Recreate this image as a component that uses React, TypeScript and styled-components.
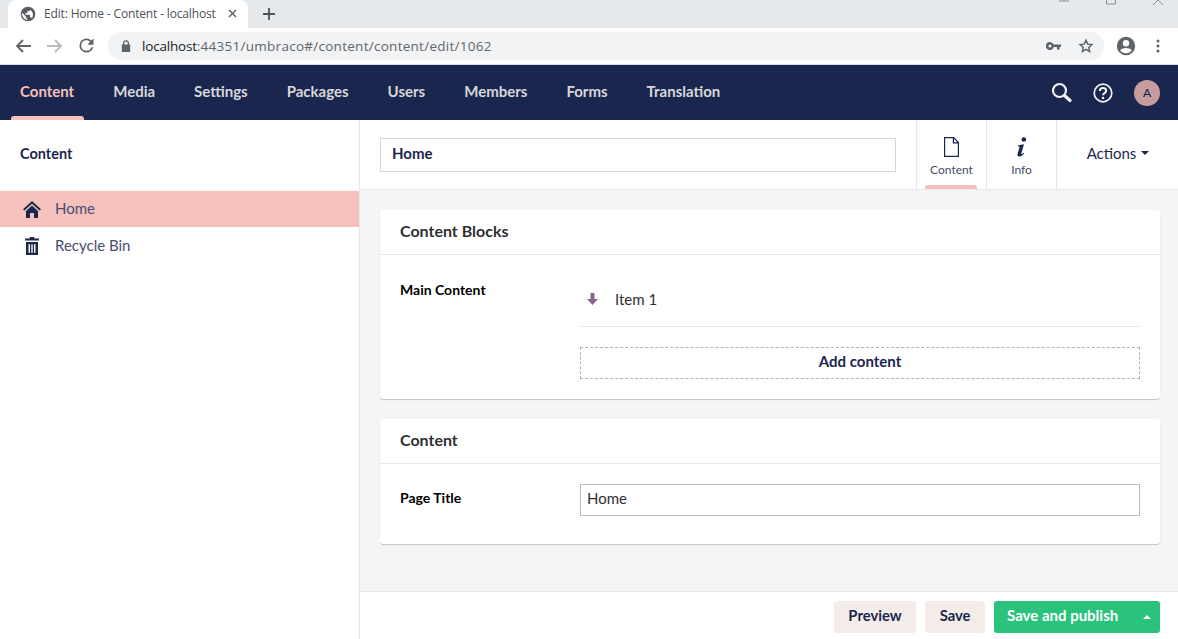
import React from 'react';
import styled, { createGlobalStyle } from 'styled-components';

const GlobalStyle = createGlobalStyle`
    html, body {
        margin: 0;
        padding: 0;
        height: 100%;
        overflow: hidden;
        background: #fff;
    }
    * {
        box-sizing: border-box;
    }
    #root {
        height: 100%;
    }
`;

const Page = styled.div`
    width: 1178px;
    height: 639px;
    display: flex;
    flex-direction: column;
    font-family: Lato, "Open Sans", sans-serif;
    color: #1b264f;
    overflow: hidden;
`;

/* browser chrome */
const TabStrip = styled.div`
    height: 28px;
    flex: none;
    background: #e6e9ec;
    display: flex;
    padding-left: 8px;
`;

const Tab = styled.div`
    width: 240px;
    height: 28px;
    background: #fff;
    border-radius: 8px 8px 0 0;
    display: flex;
    align-items: center;
    padding: 0 0 1px 12px;
    font-family: "Open Sans", sans-serif;
    font-size: 12px;
    letter-spacing: -0.16px;
    color: #4e5156;
`;

const TabTitle = styled.span`
    margin-left: 8px;
    width: 184px;
    white-space: nowrap;
`;

const NewTab = styled.div`
    margin-left: 14px;
    width: 16px;
    display: flex;
    align-items: center;
`;

const WindowControls = styled.div`
    margin-left: auto;
    display: flex;
    align-items: flex-start;
    gap: 35px;
    padding-right: 14px;
`;

const Toolbar = styled.div`
    height: 37px;
    flex: none;
    background: #fff;
    border-bottom: 1px solid #dadce0;
    display: flex;
    align-items: center;
    padding: 0 18px 1px 14px;
`;

const ToolbarButton = styled.div`
    width: 17px;
    height: 17px;
    margin-right: 15px;
    display: flex;
    align-items: center;
    justify-content: center;
`;

const Omnibox = styled.div`
    width: 996px;
    height: 28px;
    margin-left: -2px;
    border-radius: 14px;
    background: #f1f3f4;
    display: flex;
    align-items: center;
    padding: 0 10px 0 13px;
`;

const Url = styled.div`
    margin-left: 11px;
    font-family: "Open Sans", sans-serif;
    font-size: 13.5px;
    letter-spacing: 0.27px;
    color: #63666b;
    white-space: nowrap;
    flex: 1;
`;

const UrlHost = styled.span`
    color: #202124;
    letter-spacing: -0.2px;
`;

const OmniIcons = styled.div`
    display: flex;
    align-items: center;
    gap: 17px;
`;

const ToolbarEnd = styled.div`
    margin-left: 11px;
    flex: 1;
    display: flex;
    align-items: center;
    justify-content: space-between;
`;

/* umbraco header */
const Header = styled.header`
    height: 55px;
    flex: none;
    background: #1b264f;
    display: flex;
    align-items: stretch;
    padding: 0 18px 0 0.5px;
`;

const Nav = styled.nav`
    display: flex;
    flex: 1;
`;

const NavItem = styled.div<{ $active?: boolean }>`
    position: relative;
    padding: 0 19.5px 3px;
    display: flex;
    align-items: center;
    font-size: 15px;
    font-weight: 700;
    color: ${p => (p.$active ? '#f5c1bc' : '#d8d7d9')};

    ${p => p.$active && `
        &::after {
            content: '';
            position: absolute;
            left: 10px;
            right: 10px;
            bottom: 0;
            height: 4px;
            background: #f5c1bc;
            border-radius: 3px 3px 0 0;
        }
    `}
`;

const HeaderTools = styled.div`
    display: flex;
    align-items: center;
    gap: 21px;
`;

const Avatar = styled.div`
    width: 26px;
    height: 26px;
    border-radius: 50%;
    background: #c79c9c;
    color: #1b264f;
    display: flex;
    align-items: center;
    justify-content: center;
    font-size: 12px;
    font-weight: 500;
`;

/* main area */
const Main = styled.div`
    flex: 1;
    min-height: 0;
    display: flex;
`;

const Sidebar = styled.aside`
    width: 360px;
    flex: none;
    background: #fff;
    border-right: 1px solid #e9e9eb;
`;

const SidebarTitle = styled.h3`
    margin: 0;
    height: 71px;
    padding: 24px 0 0 20px;
    font-size: 14.5px;
    line-height: 20px;
    font-weight: 700;
    color: #1b264f;
`;

const TreeRow = styled.div<{ $selected?: boolean }>`
    height: 36px;
    margin-bottom: 1px;
    display: flex;
    align-items: center;
    padding-left: 22px;
    font-size: 15px;
    color: #474e6e;
    background: ${p => (p.$selected ? '#f5c1bc' : 'transparent')};
`;

const TreeLabel = styled.span`
    padding-bottom: 2px;
`;

const TreeIcon = styled.span`
    width: 20px;
    margin-right: 13px;
    display: flex;
    justify-content: center;
`;

const Editor = styled.div`
    flex: 1;
    min-width: 0;
    display: flex;
    flex-direction: column;
    background: #f6f4f4;
`;

const EditorHeader = styled.div`
    height: 70px;
    flex: none;
    background: #fff;
    border-bottom: 1px solid #e9e9eb;
    display: flex;
    align-items: stretch;
    padding-left: 20px;
`;

const NameInput = styled.div`
    width: 516px;
    height: 34px;
    margin: 18px 20px 0 0;
    border: 1px solid #d8d7d9;
    padding: 0 11px 5px;
    display: flex;
    align-items: center;
    font-size: 15px;
    font-weight: 700;
    color: #1b264f;
`;

const AppTab = styled.div<{ $active?: boolean }>`
    position: relative;
    width: 70px;
    border-left: 1px solid #e9e9eb;
    display: flex;
    flex-direction: column;
    align-items: center;
    padding-top: 17px;
    font-size: 12px;
    color: #474e6e;

    ${p => p.$active && `
        &::after {
            content: '';
            position: absolute;
            left: 8px;
            right: 9px;
            bottom: 0;
            height: 4px;
            background: #f5c1bc;
            border-radius: 3px 3px 0 0;
        }
    `}
`;

const AppTabIcon = styled.div`
    height: 22px;
    display: flex;
    align-items: flex-start;
    justify-content: center;
    margin-bottom: 3px;
`;

const Actions = styled.div`
    flex: 1;
    border-left: 1px solid #e9e9eb;
    display: flex;
    align-items: center;
    justify-content: center;
    gap: 5px;
    padding: 0 0 3px 1px;
    font-size: 15px;
    color: #1b264f;
`;

const Caret = styled.span<{ $up?: boolean; $color?: string }>`
    width: 0;
    height: 0;
    border-left: 4px solid transparent;
    border-right: 4px solid transparent;
    ${p => (p.$up ? 'border-bottom' : 'border-top')}: 4px solid ${p => p.$color || '#1b264f'};
`;

const Scroll = styled.div`
    flex: 1;
    padding: 20px 18px 0 20px;
    display: flex;
    flex-direction: column;
    gap: 20px;
`;

const Card = styled.section`
    background: #fff;
    border-radius: 3px;
    box-shadow: 0 1px 1px rgba(0, 0, 0, 0.2);
`;

const CardHeader = styled.div`
    height: 45px;
    padding: 0 20px 4px;
    border-bottom: 1px solid #e9e9eb;
    display: flex;
    align-items: center;
    font-size: 16px;
    font-weight: 700;
    color: #303033;
`;

const CardBody = styled.div<{ $height: number; $top: number }>`
    height: ${p => p.$height}px;
    padding: ${p => p.$top}px 20px 0;
    display: flex;
`;

const FieldLabel = styled.div<{ $top: number }>`
    width: 180px;
    flex: none;
    padding-top: ${p => p.$top}px;
    font-size: 14px;
    line-height: 20px;
    font-weight: 700;
    color: #000;
`;

const FieldValue = styled.div`
    flex: 1;
`;

const BlockRow = styled.div`
    height: 54px;
    border-bottom: 1px solid #e9e9eb;
    display: flex;
    align-items: center;
    padding: 0 0 1px 7px;
    font-size: 15px;
    color: #303033;
`;

const BlockIcon = styled.span`
    width: 12px;
    margin-right: 16px;
    display: flex;
`;

const AddContent = styled.div`
    height: 32px;
    margin-top: 20px;
    border: 1px dashed #b3b3b3;
    padding-bottom: 4px;
    display: flex;
    align-items: center;
    justify-content: center;
    font-size: 15px;
    font-weight: 700;
    color: #1b264f;
`;

const TextInput = styled.div`
    height: 32px;
    border: 1px solid #bbbabf;
    padding: 0 6px 5px;
    display: flex;
    align-items: center;
    font-size: 15px;
    color: #303033;
`;

const Footer = styled.footer`
    height: 48px;
    flex: none;
    background: #fff;
    border-top: 1px solid #e9e9eb;
    display: flex;
    align-items: flex-start;
    justify-content: flex-end;
    gap: 9px;
    padding: 9px 18px 0 0;
`;

const Button = styled.div`
    height: 32px;
    padding: 0 14.5px 5px;
    border-radius: 3px;
    background: #f3ece9;
    color: #1b264f;
    display: flex;
    align-items: center;
    font-size: 14.8px;
    font-weight: 700;
`;

const PublishGroup = styled.div`
    height: 32px;
    display: flex;
    border-radius: 3px;
    overflow: hidden;
    background: #2bc37c;
    color: #fff;
    font-size: 15px;
    font-weight: 700;
`;

const PublishLabel = styled.div`
    width: 138px;
    padding: 0 0 5px 13px;
    display: flex;
    align-items: center;
`;

const PublishCaret = styled.div`
    width: 28px;
    border-left: 1px solid #29bd77;
    display: flex;
    align-items: center;
    justify-content: center;
`;

const navItems = ['Content', 'Media', 'Settings', 'Packages', 'Users', 'Members', 'Forms', 'Translation'];

const App = () => {
    return (
        <Page>
            <GlobalStyle />
            <TabStrip>
                <Tab>
                    <svg width="16" height="16" viewBox="0 0 24 24">
                        <path fill="#5a5d63" d="M12 1a11 11 0 1 0 0 22 11 11 0 0 0 0-22zm-1 19.9A9 9 0 0 1 3 12c0-.6.1-1.200.2-1.800L9 16v1c0 1.100.9 2 2 2v1.900zm6.900-2.500A2 2 0 0 0 16 17h-1v-3c0-.6-.4-1-1-1H8v-2h2c.6 0 1-.4 1-1V8h2a2 2 0 0 0 2-2v-.4a9 9 0 0 1 2.900 12.800z" />
                    </svg>
                    <TabTitle>Edit: Home - Content - localhost</TabTitle>
                    <svg width="9" height="9" viewBox="0 0 9 9">
                        <path stroke="#5f6368" strokeWidth="1.500" d="M1 1l7 7M8 1L1 8" />
                    </svg>
                </Tab>
                <NewTab>
                    <svg width="14" height="14" viewBox="0 0 14 14">
                        <path stroke="#4f5257" strokeWidth="1.800" d="M7 1v12M1 7h12" />
                    </svg>
                </NewTab>
                <WindowControls>
                    <svg width="12" height="5" viewBox="0 0 12 5"><path stroke="#8a8c90" d="M1 1h10" /></svg>
                    <svg width="12" height="5" viewBox="0 0 12 5"><path stroke="#8a8c90" fill="none" d="M1.500 -3h9v7h-9z" /></svg>
                    <svg width="12" height="5" viewBox="0 0 12 5"><path stroke="#8a8c90" fill="none" d="M1 5l5-5 5 5" /></svg>
                </WindowControls>
            </TabStrip>
            <Toolbar>
                <ToolbarButton>
                    <svg width="16" height="14" viewBox="0 0 16 14">
                        <path stroke="#5f6368" strokeWidth="1.800" fill="none" d="M16 7H2M8 1L2 7l6 6" />
                    </svg>
                </ToolbarButton>
                <ToolbarButton>
                    <svg width="16" height="14" viewBox="0 0 16 14">
                        <path stroke="#babcbe" strokeWidth="1.800" fill="none" d="M0 7h14M8 1l6 6-6 6" />
                    </svg>
                </ToolbarButton>
                <ToolbarButton>
                    <svg width="21" height="21" viewBox="0 0 24 24" style={{ flex: 'none' }}>
                        <path fill="#5f6368" d="M17.650 6.350A7.960 7.960 0 0 0 12 4a8 8 0 1 0 7.730 10h-2.080A6 6 0 1 1 12 6c1.660 0 3.140.69 4.220 1.780L13 11h7V4l-2.350 2.350z" />
                    </svg>
                </ToolbarButton>
                <Omnibox>
                    <svg width="10" height="12" viewBox="0 0 10 12">
                        <path fill="#5f6368" d="M2 4.500V3.300a3 3 0 0 1 6 0v1.200h1.200V12H.8V4.500H2zm1.200 0h3.600V3.300a1.800 1.800 0 0 0-3.600 0v1.200z" />
                    </svg>
                    <Url><UrlHost>localhost</UrlHost>:44351/umbraco#/content/content/edit/1062</Url>
                    <OmniIcons>
                        <svg width="15" height="8" viewBox="0 0 15 8">
                            <path fill="#5f6368" fillRule="evenodd" d="M4 0a4 4 0 0 1 3.700 2.500H15V5h-1.500v2.500h-2.500V5H7.700A4 4 0 1 1 4 0zm0 2.500a1.500 1.500 0 1 0 0 3 1.500 1.500 0 0 0 0-3z" />
                        </svg>
                        <svg width="16" height="16" viewBox="0 0 24 24">
                            <path fill="none" stroke="#5f6368" strokeWidth="2.200" d="M12 3.500l2.600 5.700 6.200.7-4.600 4.200 1.300 6.100L12 17.100l-5.500 3.100 1.300-6.100-4.600-4.200 6.200-.7z" />
                        </svg>
                    </OmniIcons>
                </Omnibox>
                <ToolbarEnd>
                    <svg width="22" height="22" viewBox="0 0 24 24">
                        <path fill="#5f6368" d="M12 2a10 10 0 1 0 0 20 10 10 0 0 0 0-20zm0 3.500a3.500 3.500 0 1 1 0 7 3.500 3.500 0 0 1 0-7zm0 14.300c-2.700 0-5-1.300-6.400-3.300 1.200-1.500 4-2.300 6.400-2.300s5.200.8 6.400 2.300c-1.400 2-3.700 3.300-6.400 3.300z" />
                    </svg>
                    <svg width="4" height="14" viewBox="0 0 4 14">
                        <circle cx="2" cy="2" r="1.500" fill="#5f6368" />
                        <circle cx="2" cy="7" r="1.500" fill="#5f6368" />
                        <circle cx="2" cy="12" r="1.500" fill="#5f6368" />
                    </svg>
                </ToolbarEnd>
            </Toolbar>
            <Header>
                <Nav>
                    {navItems.map((item, i) => (
                        <NavItem key={item} $active={i === 0}>{item}</NavItem>
                    ))}
                </Nav>
                <HeaderTools>
                    <svg width="21" height="21" viewBox="0 0 21 21">
                        <circle cx="8.500" cy="8.500" r="6.500" fill="none" stroke="#f2f2f2" strokeWidth="2.200" />
                        <path stroke="#f2f2f2" strokeWidth="3.200" strokeLinecap="round" d="M13.500 13.500l5.500 5" />
                    </svg>
                    <svg width="20" height="20" viewBox="0 0 20 20">
                        <circle cx="10" cy="10" r="8.800" fill="none" stroke="#f2f2f2" strokeWidth="1.700" />
                        <path fill="none" stroke="#f2f2f2" strokeWidth="2" d="M6.800 8c0-2 1.500-3.100 3.200-3.100s3.200 1 3.200 2.800c0 2.400-3.200 2.400-3.200 4.500" />
                        <circle cx="10" cy="15" r="1.300" fill="#f2f2f2" />
                    </svg>
                    <Avatar>A</Avatar>
                </HeaderTools>
            </Header>
            <Main>
                <Sidebar>
                    <SidebarTitle>Content</SidebarTitle>
                    <TreeRow $selected>
                        <TreeIcon>
                            <svg width="18" height="17" viewBox="0 0 18 17">
                                <path fill="#1b264f" d="M9 0l9 8.200-1.300 1.400L9 2.700 1.300 9.600 0 8.200z" />
                                <path fill="#1b264f" d="M9 4.500l6 5.400V17h-4v-5H7v5H3V9.900z" />
                            </svg>
                        </TreeIcon>
                        <TreeLabel>Home</TreeLabel>
                    </TreeRow>
                    <TreeRow>
                        <TreeIcon>
                            <svg width="14" height="18" viewBox="0 0 14 18">
                                <path fill="#1b264f" d="M5 0h4l.6 1.500H14v2H0v-2h4.400z" />
                                <path fill="#1b264f" fillRule="evenodd" d="M1 5h12v13H1zm2.500 2.200v8.600H5V7.200zm2.800 0v8.600h1.400V7.200zm2.700 0v8.600h1.500V7.200z" />
                            </svg>
                        </TreeIcon>
                        <TreeLabel>Recycle Bin</TreeLabel>
                    </TreeRow>
                </Sidebar>
                <Editor>
                    <EditorHeader>
                        <NameInput>Home</NameInput>
                        <AppTab $active>
                            <AppTabIcon>
                                <svg width="15" height="20" viewBox="0 0 15 20">
                                    <path fill="none" stroke="#1b264f" strokeWidth="1.200" d="M.6.6h9l4.800 5v13.800H.6zM9.400.6v5.200h5" />
                                </svg>
                            </AppTabIcon>
                            Content
                        </AppTab>
                        <AppTab>
                            <AppTabIcon>
                                <svg width="10" height="20" viewBox="0 0 10 20">
                                    <circle cx="6.800" cy="2.500" r="2.300" fill="#1b264f" />
                                    <path fill="#1b264f" d="M1.200 8.300L7 7.200 4.300 16.500c-.2.700.4.800 1 .3l1.300-1.100.6.600C5.800 18 4.300 19.500 2.400 19.500.7 19.500.1 18.300.5 17L2.500 10.300c.2-.7-.2-.9-1.400-.8z" />
                                </svg>
                            </AppTabIcon>
                            Info
                        </AppTab>
                        <Actions>Actions <Caret /></Actions>
                    </EditorHeader>
                    <Scroll>
                        <Card>
                            <CardHeader>Content Blocks</CardHeader>
                            <CardBody $height={144} $top={18}>
                                <FieldLabel $top={7}>Main Content</FieldLabel>
                                <FieldValue>
                                    <BlockRow>
                                        <BlockIcon>
                                            <svg width="11" height="12" viewBox="0 0 11 12">
                                                <path fill="#8a6490" d="M3.500 0h4v6H11l-5.500 6L0 6h3.500z" />
                                            </svg>
                                        </BlockIcon>
                                        Item 1
                                    </BlockRow>
                                    <AddContent>Add content</AddContent>
                                </FieldValue>
                            </CardBody>
                        </Card>
                        <Card>
                            <CardHeader>Content</CardHeader>
                            <CardBody $height={80} $top={20}>
                                <FieldLabel $top={4}>Page Title</FieldLabel>
                                <FieldValue>
                                    <TextInput>Home</TextInput>
                                </FieldValue>
                            </CardBody>
                        </Card>
                    </Scroll>
                    <Footer>
                        <Button>Preview</Button>
                        <Button>Save</Button>
                        <PublishGroup>
                            <PublishLabel>Save and publish</PublishLabel>
                            <PublishCaret><Caret $up $color="#fff" /></PublishCaret>
                        </PublishGroup>
                    </Footer>
                </Editor>
            </Main>
        </Page>
    );
};

export default App;
